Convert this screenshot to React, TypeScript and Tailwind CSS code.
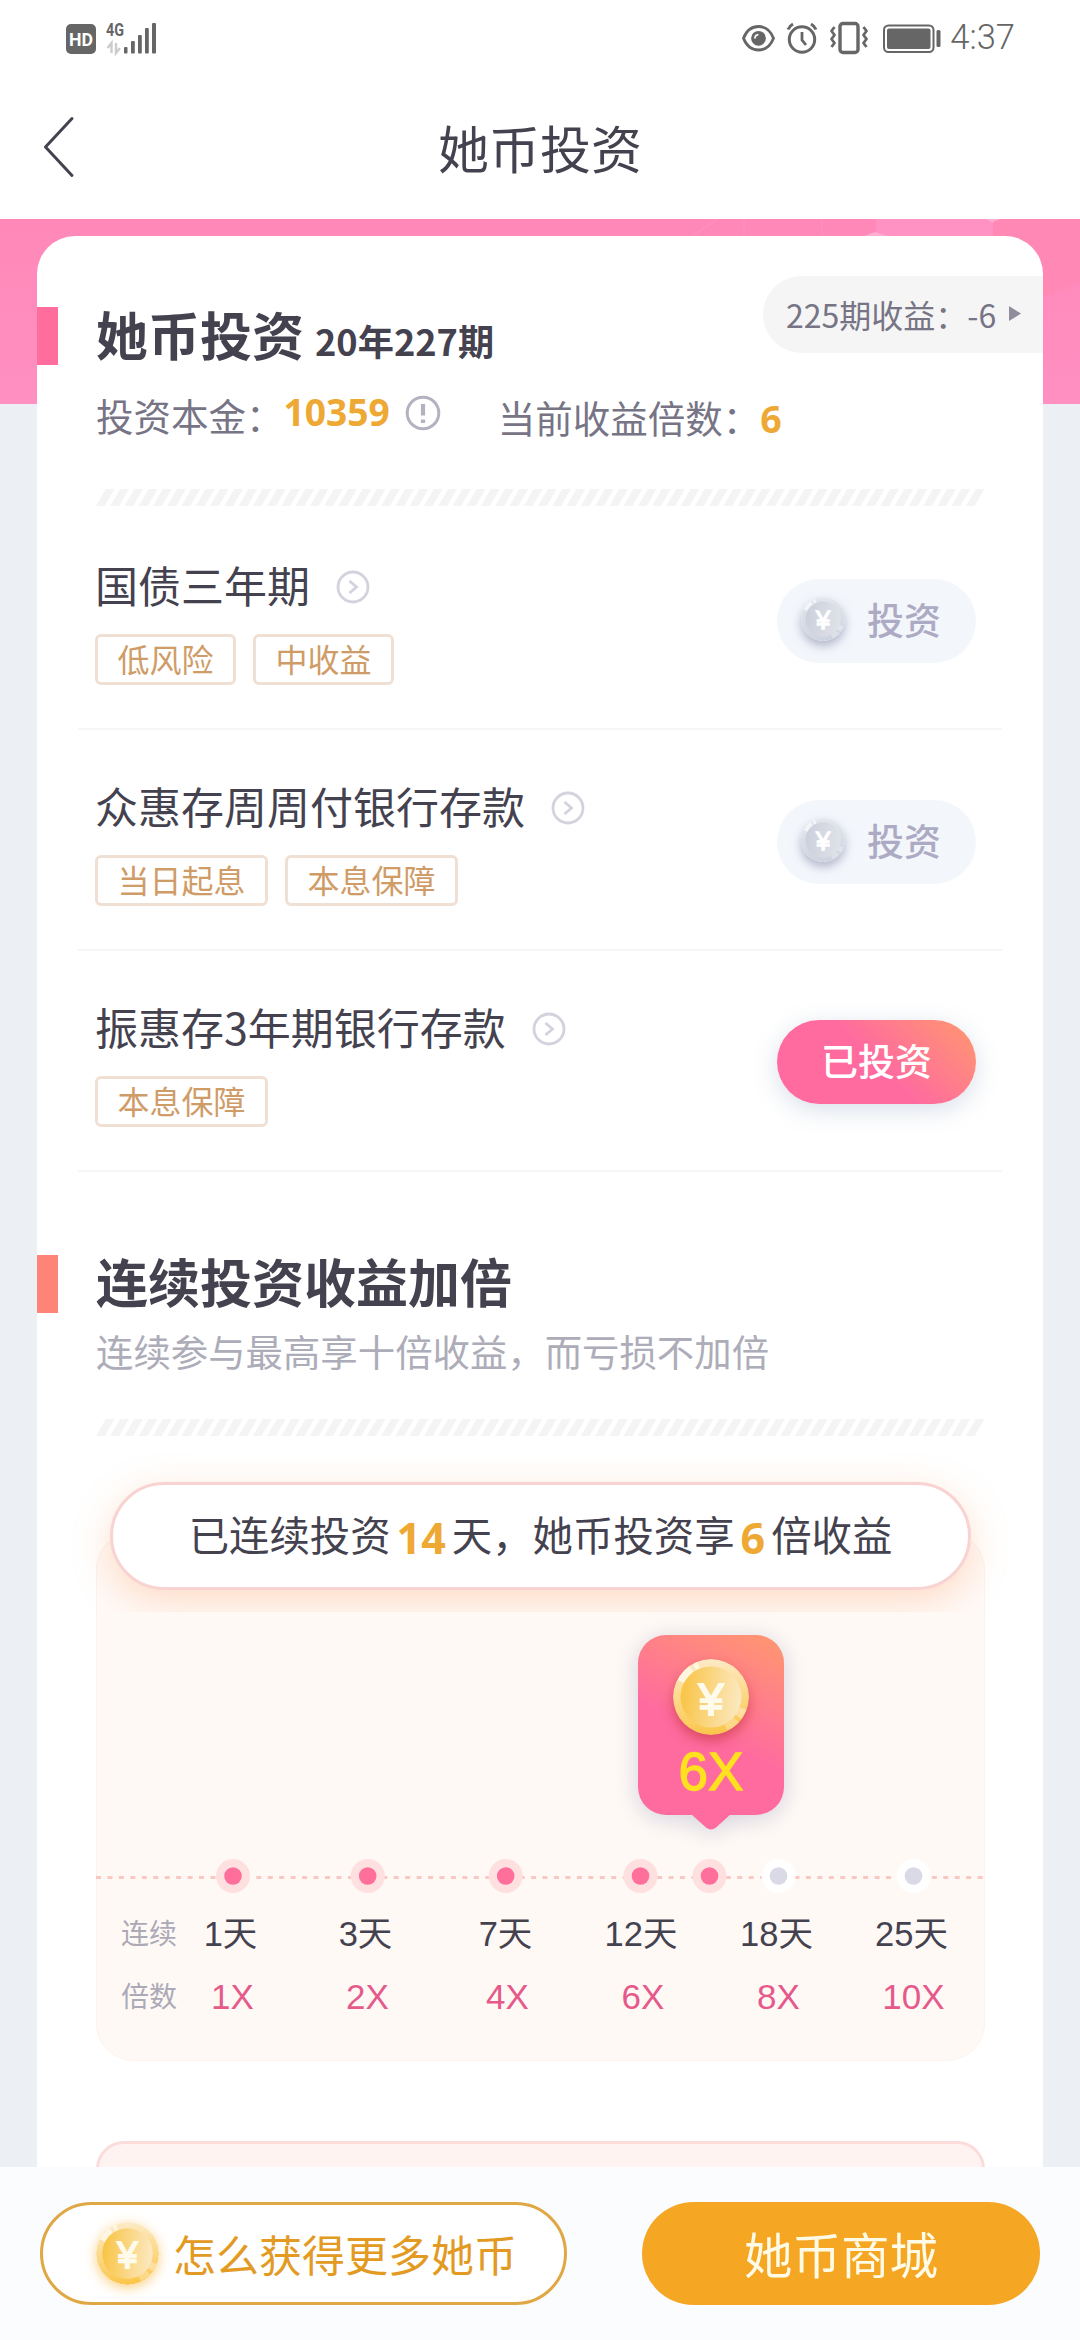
import { useId } from "react";

type Product = { name: string; tags: string[]; invested: boolean };

const products: Product[] = [
    { name: "国债三年期", tags: ["低风险", "中收益"], invested: false },
    { name: "众惠存周周付银行存款", tags: ["当日起息", "本息保障"], invested: false },
    { name: "振惠存3年期银行存款", tags: ["本息保障"], invested: true },
];

const steps = [
    { days: "1天", rate: "1X" },
    { days: "3天", rate: "2X" },
    { days: "7天", rate: "4X" },
    { days: "12天", rate: "6X" },
    { days: "18天", rate: "8X" },
    { days: "25天", rate: "10X" },
];

const dots = [
    { x: 137, active: true },
    { x: 271.7, active: true },
    { x: 409.7, active: true },
    { x: 544.5, active: true },
    { x: 613.5, active: true },
    { x: 682.5, active: false },
    { x: 817.5, active: false },
];

const coinColors = {
    gold: { rimTop: "#fdebc8", rimBottom: "#fbc548", left: "#f9c64b", right: "#fce9c2", shine: "#fff6e2", yen: "#fffbec" },
    silver: { rimTop: "#e4e7ee", rimBottom: "#cdd3de", left: "#cdd1dc", right: "#e0e2e9", shine: "#f4f5f9", yen: "#ffffff" },
};

function Coin({ tone, className }: { tone: "gold" | "silver"; className: string }) {
    const id = useId();
    const c = coinColors[tone];
    return (
        <svg viewBox="0 0 76 76" className={`rounded-full shrink-0 ${className}`}>
            <defs>
                <linearGradient id={`${id}rim`} x1="0.4" y1="0" x2="0.5" y2="1">
                    <stop offset="0" stopColor={c.rimTop} />
                    <stop offset="1" stopColor={c.rimBottom} />
                </linearGradient>
                <linearGradient id={`${id}face`} x1="0" y1="0.45" x2="1" y2="0.55">
                    <stop offset="0.05" stopColor={c.left} />
                    <stop offset="1" stopColor={c.right} />
                </linearGradient>
            </defs>
            <circle cx="38" cy="38" r="38" fill={`url(#${id}rim)`} />
            <g fill="none" stroke={c.shine} strokeWidth="7">
                <path d="M8 22.5A34 34 0 0 1 18.5 10.2" />
                <path d="M21.5 8.2A34 34 0 0 1 25.5 6.3" />
                <path d="M70 49.5A34 34 0 0 1 65.5 57.6" opacity="0.45" />
                <path d="M63 61A34 34 0 0 1 53 68.5" opacity="0.35" />
            </g>
            <circle cx="38" cy="38" r="30.5" fill={`url(#${id}face)`} />
            <text x="38" y="56" textAnchor="middle" fontSize="44" fill={c.yen} stroke={c.yen} strokeWidth="2.2" className="font-['Liberation_Sans',sans-serif]">¥</text>
        </svg>
    );
}

function StatusBar() {
    return (
        <div className="flex h-[75px] items-center justify-between pr-[65px] pl-[65px] text-[#666666]">
            <svg width="92" height="50" viewBox="64 12 92 50" fill="#666666">
                <rect x="65" y="23" width="30" height="30" rx="5" />
                <text x="68" y="45" fontSize="19" fontWeight="700" fill="#ffffff" textLength="24" lengthAdjust="spacingAndGlyphs" className="font-[Roboto,sans-serif]">HD</text>
                <text x="105" y="35" fontSize="18.5" fontWeight="700" textLength="18" lengthAdjust="spacingAndGlyphs" className="font-[Roboto,sans-serif]">4G</text>
                <g stroke="#cccccc" strokeWidth="2.4" fill="none">
                    <path d="M106.500 47l4-5v10" />
                    <path d="M115 42v10l4-5" />
                </g>
                <rect x="123" y="46" width="3.5" height="6.5" rx="1" />
                <rect x="130" y="40" width="3.8" height="12.5" rx="1" />
                <rect x="137" y="34" width="3.8" height="18.5" rx="1" />
                <rect x="144" y="27" width="3.8" height="25.5" rx="1" />
                <rect x="151" y="22" width="4" height="30.5" rx="1" />
            </svg>
            <div className="flex items-center gap-[8px]">
                <svg width="200" height="34" viewBox="742 20 200 34" fill="none" stroke="#666666">
                    <path d="M743.5 37.3Q748 25.5 758.5 25.5T773.5 37.3Q769 49 758.5 49T743.5 37.3z" strokeWidth="2.8" />
                    <circle cx="758.5" cy="37.3" r="7.4" fill="#666666" stroke="none" />
                    <path d="M755 37.5q0-3.6 3.4-3.8" stroke="#ffffff" strokeWidth="1.8" />
                    <circle cx="802" cy="38.5" r="12.7" strokeWidth="3" />
                    <path d="M802 31v8l4 5" strokeWidth="2.8" />
                    <path d="M788 28.5q1.5-3.5 5-5.5M816 28.5q-1.5-3.5-5-5.5" strokeWidth="3" />
                    <rect x="840" y="22.5" width="18" height="29" rx="3" strokeWidth="3.4" />
                    <path d="M834.5 26l-3 4 3 4-3 4 3 4-3 4M863.5 26l3 4-3 4 3 4-3 4 3 4" strokeWidth="2.8" strokeLinejoin="round" />
                    <rect x="884" y="24.5" width="49.5" height="26.5" rx="4.5" strokeWidth="2" />
                    <rect x="887" y="27.5" width="43.5" height="20.5" rx="2" fill="#666666" stroke="none" />
                    <rect x="936.5" y="29" width="4" height="17" rx="1.5" fill="#666666" stroke="none" />
                </svg>
                <span className="font-[Roboto,sans-serif] text-[34.5px] leading-none font-light">4:37</span>
            </div>
        </div>
    );
}

function NavBar() {
    return (
        <div className="grid h-[144px] grid-cols-[1fr_auto_1fr] items-center">
            <svg width="34" height="64" viewBox="0 0 34 64" className="ml-[41px]" fill="none" stroke="#44424f" strokeWidth="3" strokeLinecap="round">
                <path d="M31 3.5L4.5 32 31 60.5" strokeLinejoin="round" />
            </svg>
            <h1 className="text-[51px] leading-none">她币投资</h1>
        </div>
    );
}

function StripeDivider() {
    const stripes = Array.from({ length: 62 }, (_, i) => i * 14.26);
    return (
        <svg width="889" height="17" viewBox="0 0 889 17" fill="#f4f4f4" className="block">
            {stripes.map((x) => (
                <path key={x} d={`M${x} 17l9.8-17h8.8l-9.8 17z`} />
            ))}
        </svg>
    );
}

function ProductRow({ product }: { product: Product }) {
    return (
        <li className="flex h-[221px] items-start justify-between border-b-2 border-[#f6f6f8] pr-[26px] pl-[17px]">
            <div className="pt-[56px]">
                <div className="flex h-[44px] items-center gap-[26px]">
                    <span className="pb-[6px] text-[43px] leading-[44px]">{product.name}</span>
                    <svg width="34" height="34" viewBox="0 0 34 34" fill="none" stroke="#d3d2dd" strokeWidth="2.8">
                        <circle cx="17" cy="17" r="15" />
                        <path d="M13.5 11l7 6-7 6" />
                    </svg>
                </div>
                <div className="mt-[25px] flex gap-[17px]">
                    {product.tags.map((tag) => (
                        <span key={tag} className="flex h-[51px] items-center rounded-[6px] border-[3px] border-[#f0e0d4] px-[19.5px] pb-[3px] text-[32px] leading-none text-[#cf9c68]">{tag}</span>
                    ))}
                </div>
            </div>
            {product.invested ? (
                <button className="mt-[69px] flex h-[84px] w-[199px] items-center justify-center rounded-full bg-linear-[45deg,#ff6b9f_50%,#ff9473_95%] pb-[4px] text-[37px] leading-none font-medium text-white shadow-[0_6px_24px_rgba(120,140,175,0.28)]">已投资</button>
            ) : (
                <button className="mt-[70px] flex h-[84px] w-[199px] items-center gap-[22px] rounded-full bg-[#f3f6fb] pb-[4px] pl-[24px] text-[37px] leading-none font-medium text-[#adabc4]">
                    <Coin tone="silver" className="size-[44px] shadow-[0_5px_10px_rgba(130,130,165,0.55)]" />
                    投资
                </button>
            )}
        </li>
    );
}

function Timeline() {
    return (
        <svg width="889" height="34" viewBox="0 0 889 34" className="mt-[29px] block">
            <path d="M0 18.5H889" stroke="#fac8c3" strokeWidth="3" strokeDasharray="5 6.45" />
            {dots.map((d) => (
                <g key={d.x}>
                    <circle cx={d.x} cy="17" r="17" fill={d.active ? "#ffe0e0" : "#ffffff"} />
                    <circle cx={d.x} cy="17" r="8.8" fill={d.active ? "#ff6f9c" : "#dadae6"} />
                </g>
            ))}
        </svg>
    );
}

function MultiplierBubble() {
    return (
        <div className="mt-[23px] ml-[542px] flex h-[195px] w-[146px] flex-col items-center drop-shadow-[0_4px_12px_rgba(110,120,160,0.3)]">
            <div className="flex h-[180px] w-full flex-col items-center rounded-[28px] bg-linear-[26deg,#ff6b9f_45%,#ff9473_95%] pt-[24px]">
                <Coin tone="gold" className="size-[76px] shadow-[0_6px_12px_rgba(190,50,50,0.55)]" />
                <span className="mt-[11px] font-['Liberation_Sans',sans-serif] text-[53px] leading-[52px] text-[#ffe11f] [-webkit-text-stroke:1.3px_#ffe11f]">6X</span>
            </div>
            <svg width="40" height="16" viewBox="0 0 40 16" className="-mt-px block" fill="#ff6b9f">
                <path d="M0 0H40L25 13.5Q20 17.5 15 13.5z" />
            </svg>
        </div>
    );
}

export default function App() {
    return (
        <div className="flex h-[2340px] w-[1080px] flex-col overflow-hidden bg-white font-['Noto_Sans_CJK_SC',sans-serif] text-[#44424f]">
            <StatusBar />
            <NavBar />

            <main className="relative h-[1948px] overflow-hidden bg-[#ecf0f5] pt-[17px]">
                <div className="absolute inset-x-0 top-0 h-[185px] bg-linear-to-b from-[#ff88b8] to-[#ff90c2]">
                    <svg width="1080" height="185" viewBox="0 0 1080 185">
                        <path d="M876 0H991L993 2V30H876z" fill="#ff92c3" />
                        <path d="M864 17L875 13L888 17zM986 0H1000L993 3.5z" fill="#ffaed1" />
                        <path d="M994 2L1003 0H1080V62L1040 80L994 40z" fill="#ff88b5" />
                        <path d="M692 17L718 0M744 0V17M822 0V17" stroke="#ff8fbf" strokeWidth="1.5" />
                    </svg>
                </div>

                <div className="relative mx-[37px] h-[1960px] rounded-t-[38px] bg-white">
                    <section className="h-[253px] pt-[40px]">
                        <div className="flex h-[89px] items-end">
                            <div className="h-[58px] w-[21px] bg-[#ff6d9d]" />
                            <h2 className="-mb-[4px] ml-[38px] text-[52px] leading-[58px] font-bold">
                                她币投资<span className="ml-[11px] text-[36.2px]">20年227期</span>
                            </h2>
                            <button className="ml-auto flex h-[77px] w-[280px] items-center self-start rounded-l-full bg-[#f5f5f5] pb-[2px] pl-[23px] text-[32px] leading-none text-[#767485]">
                                225期收益：-6
                                <svg width="12" height="15" viewBox="0 0 12 15" className="ml-[13px]" fill="#8f8d9c">
                                    <path d="M0 0L12 7.5L0 15z" />
                                </svg>
                            </button>
                        </div>
                        <div className="mt-[31px] ml-[59px] flex items-start text-[37.5px] leading-[38px] text-[#767485]">
                            <span>投资本金：</span>
                            <span className="-mt-[3px] font-['Noto_Sans',sans-serif] text-[37.2px] font-bold text-[#eea834]">10359</span>
                            <svg width="36" height="36" viewBox="0 0 36 36" className="-mt-[1px] ml-[15px]" fill="none" stroke="#b3b2c1" strokeWidth="3">
                                <circle cx="18" cy="18" r="15.8" />
                                <path d="M18 9V20.5M18 24.5V28" strokeWidth="4.2" />
                            </svg>
                            <span className="mt-[2px] ml-[57px]">当前收益倍数：</span>
                            <span className="mt-[4px] font-['Noto_Sans',sans-serif] font-bold text-[#eea834]">6</span>
                        </div>
                    </section>
                    <div className="ml-[59px]">
                        <StripeDivider />
                    </div>

                    <ul className="mx-[41px] mt-[3px]">
                        {products.map((p) => (
                            <ProductRow key={p.name} product={p} />
                        ))}
                    </ul>

                    <section className="h-[247px] pt-[83px]">
                        <div className="flex h-[58px] items-center">
                            <div className="h-[58px] w-[21px] bg-[#ff8478]" />
                            <h2 className="ml-[38px] pb-[6px] text-[52px] leading-[58px] font-bold">连续投资收益加倍</h2>
                        </div>
                        <p className="mt-[19px] ml-[59px] text-[37.4px] leading-[38px] text-[#adacb9]">连续参与最高享十倍收益，而亏损不加倍</p>
                    </section>
                    <div className="ml-[59px]">
                        <StripeDivider />
                    </div>

                    <section className="mt-[96px] ml-[59px] flex h-[529px] w-[889px] flex-col rounded-[38px] bg-[#fff9f6] shadow-[inset_0_0_0_1px_#fdf2ec]">
                        <div className="-mx-[24px] -mt-[82px] h-[162px] shrink-0 overflow-hidden px-[38px] pt-[32px]">
                            <div className="flex h-[108px] items-center justify-center rounded-full border-[3px] border-[#f9d3d1] bg-white pb-[3px] text-[40.4px] leading-none shadow-[0_10px_36px_rgba(250,165,110,0.36)]">
                                <span>已连续投资</span>
                                <span className="mx-[6px] pt-[6px] font-['Noto_Sans',sans-serif] text-[43px] font-bold text-[#eea834]">14</span>
                                <span>天，她币投资享</span>
                                <span className="mx-[6px] pt-[6px] font-['Noto_Sans',sans-serif] text-[43px] font-bold text-[#eea834]">6</span>
                                <span>倍收益</span>
                            </div>
                        </div>
                        <MultiplierBubble />
                        <Timeline />
                        <div className="mt-[22px] grid h-[36px] grid-cols-[67px_135px_135px_145px_126px_145px_125px] items-center text-center font-['Liberation_Sans','Noto_Sans_CJK_SC',sans-serif] text-[34.5px] leading-[36px]">
                            <span className="pt-[2px] pl-[25px] text-left text-[28px] whitespace-nowrap text-[#abaab6]">连续</span>
                            {steps.map((s) => (
                                <span key={s.days}>{s.days}</span>
                            ))}
                        </div>
                        <div className="mt-[27px] grid h-[36px] grid-cols-[69px_135px_135px_145px_126px_145px_125px] items-center text-center font-['Liberation_Sans','Noto_Sans_CJK_SC',sans-serif] text-[35px] leading-[36px] text-[#e55a8a]">
                            <span className="pt-[2px] pl-[25px] text-left text-[28px] whitespace-nowrap text-[#abaab6]">倍数</span>
                            {steps.map((s) => (
                                <span key={s.rate}>{s.rate}</span>
                            ))}
                        </div>
                    </section>

                    <div className="mt-[80px] ml-[59px] h-[120px] w-[889px] rounded-[28px] border-[3px] border-[#fbdcdb] bg-[#fff3f2]" />
                </div>
            </main>

            <footer className="flex h-[173px] items-start justify-between bg-[#fbfcfe] pt-[35px] pr-[40px] pl-[40px]">
                <button className="flex h-[103px] w-[527px] items-center gap-[14px] rounded-full border-[3px] border-[#e0a745] bg-white pl-[53px] text-[43px] leading-none text-[#e39a22]">
                    <Coin tone="gold" className="size-[63px] shadow-[0_3px_12px_rgba(250,190,80,0.7)]" />
                    怎么获得更多她币
                </button>
                <button className="flex h-[103px] w-[398px] items-center justify-center rounded-full bg-[#f5a623] text-[48.5px] leading-none text-[#fffbe6]">她币商城</button>
            </footer>
        </div>
    );
}
